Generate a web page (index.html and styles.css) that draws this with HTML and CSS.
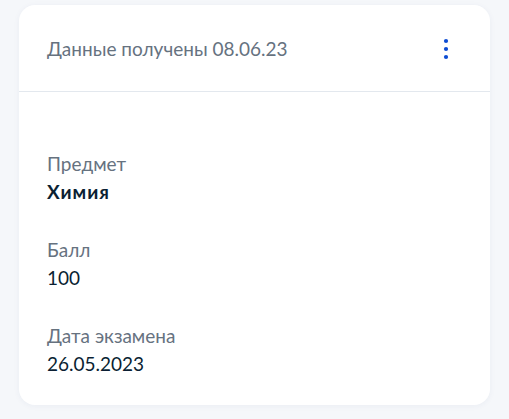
FILE: index.html
```html
<!DOCTYPE html>
<html lang="ru">
<head>
<meta charset="utf-8">
<link rel="stylesheet" href="styles.css">
</head>
<body>
<div class="card">
  <div class="card-header">
    <span class="header-title">Данные получены 08.06.23</span>
    <button class="menu-btn" aria-label="Меню">
      <svg width="24" height="24" viewBox="0 0 24 24"><circle cx="12" cy="4" r="2.1" fill="#0d4cd3"/><circle cx="12" cy="12" r="2.1" fill="#0d4cd3"/><circle cx="12" cy="20" r="2.1" fill="#0d4cd3"/></svg>
    </button>
  </div>
  <div class="card-body">
    <div class="field">
      <div class="label">Предмет</div>
      <div class="value bold">Химия</div>
    </div>
    <div class="field">
      <div class="label">Балл</div>
      <div class="value">100</div>
    </div>
    <div class="field">
      <div class="label">Дата экзамена</div>
      <div class="value">26.05.2023</div>
    </div>
  </div>
</div>
</body>
</html>
```
FILE: styles.css
```css
* { box-sizing: border-box; }
html, body { margin: 0; padding: 0; }
body {
  background: #f5f7fa;
  font-family: Lato, "Noto Sans", sans-serif;
  width: 509px;
  height: 419px;
  overflow: hidden;
}
.card {
  margin: 5px 0 0 19px;
  width: 471px;
  height: 400px;
  background: #ffffff;
  border-radius: 16px;
  box-shadow: 0 1px 6px rgba(30, 60, 120, 0.05);
}
.card-header {
  display: flex;
  align-items: center;
  justify-content: space-between;
  height: 87px;
  padding: 1px 32px 0 28px;
  border-bottom: 1px solid #e3e8ee;
}
.header-title {
  font-size: 19px;
  line-height: 28px;
  color: #66727f;
}
.menu-btn {
  border: 0;
  background: none;
  padding: 0;
  width: 24px;
  height: 24px;
  display: flex;
}
.card-body {
  padding: 58px 28px 0 28px;
  display: flex;
  flex-direction: column;
  gap: 30px;
}
.label {
  font-size: 19px;
  line-height: 28px;
  color: #66727f;
}
.value {
  font-size: 19px;
  line-height: 28px;
  color: #0b1f33;
}
.value.bold { font-weight: 700; letter-spacing: 1px; }
```
